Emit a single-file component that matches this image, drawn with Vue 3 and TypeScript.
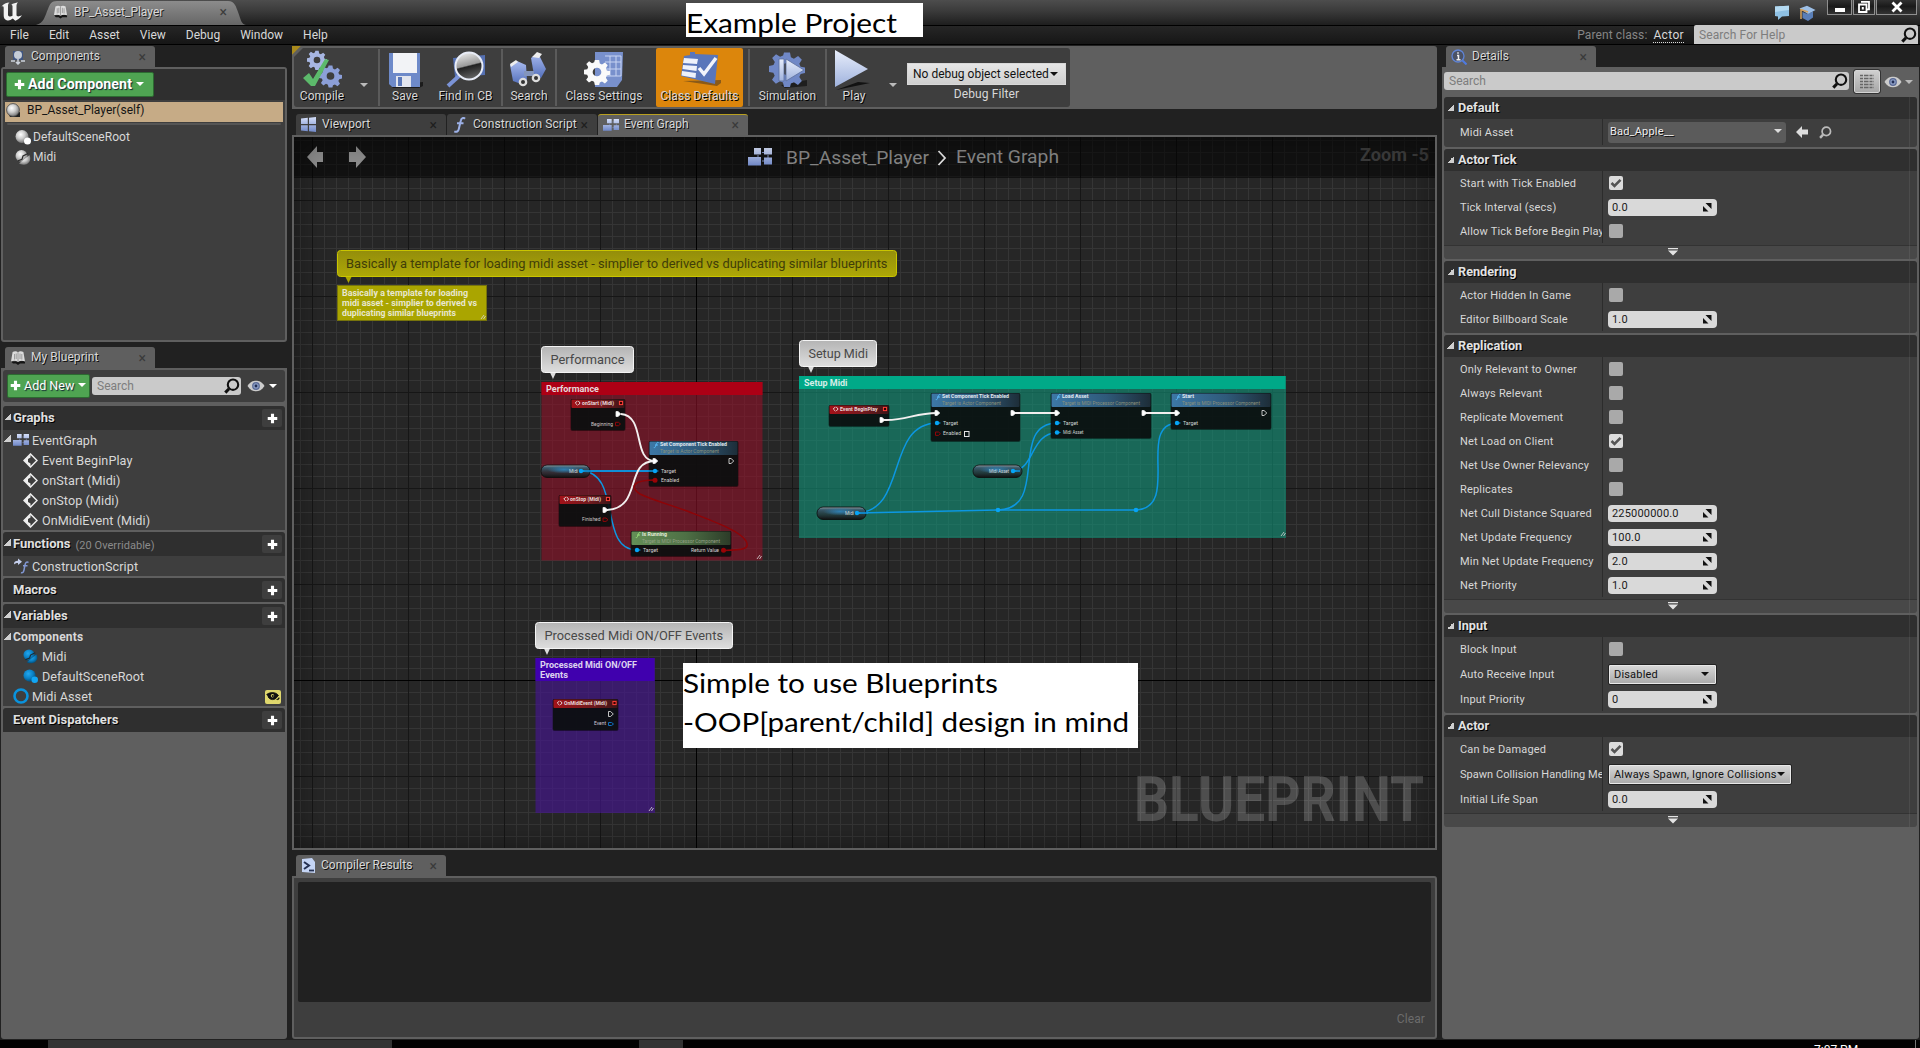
<script setup lang="ts">
interface Row { label: string; kind: 'check' | 'num' | 'drop' | 'asset'; value?: string; on?: boolean; wide?: boolean }
interface Section { title: string; rows: Row[]; more?: boolean }
interface Label { x: number; y: number; w: number; s: number; t: string; c: string; b?: boolean }
interface GraphNode { x: number; y: number; w: number; h: number; head: number; kind: 'event' | 'func' | 'pure' }

const menus = ['File', 'Edit', 'Asset', 'View', 'Debug', 'Window', 'Help']

const sections: Section[] = [
  { title: 'Default', rows: [{ label: 'Midi Asset', kind: 'asset', value: 'Bad_Apple__' }] },
  {
    title: 'Actor Tick', more: true, rows: [
      { label: 'Start with Tick Enabled', kind: 'check', on: true },
      { label: 'Tick Interval (secs)', kind: 'num', value: '0.0' },
      { label: 'Allow Tick Before Begin Play', kind: 'check' },
    ],
  },
  {
    title: 'Rendering', rows: [
      { label: 'Actor Hidden In Game', kind: 'check' },
      { label: 'Editor Billboard Scale', kind: 'num', value: '1.0' },
    ],
  },
  {
    title: 'Replication', more: true, rows: [
      { label: 'Only Relevant to Owner', kind: 'check' },
      { label: 'Always Relevant', kind: 'check' },
      { label: 'Replicate Movement', kind: 'check' },
      { label: 'Net Load on Client', kind: 'check', on: true },
      { label: 'Net Use Owner Relevancy', kind: 'check' },
      { label: 'Replicates', kind: 'check' },
      { label: 'Net Cull Distance Squared', kind: 'num', value: '225000000.0' },
      { label: 'Net Update Frequency', kind: 'num', value: '100.0' },
      { label: 'Min Net Update Frequency', kind: 'num', value: '2.0' },
      { label: 'Net Priority', kind: 'num', value: '1.0' },
    ],
  },
  {
    title: 'Input', rows: [
      { label: 'Block Input', kind: 'check' },
      { label: 'Auto Receive Input', kind: 'drop', value: 'Disabled' },
      { label: 'Input Priority', kind: 'num', value: '0' },
    ],
  },
  {
    title: 'Actor', more: true, rows: [
      { label: 'Can be Damaged', kind: 'check', on: true },
      { label: 'Spawn Collision Handling Method', kind: 'drop', value: 'Always Spawn, Ignore Collisions', wide: true },
      { label: 'Initial Life Span', kind: 'num', value: '0.0' },
    ],
  },
]

const events = ['Event BeginPlay', 'onStart (Midi)', 'onStop (Midi)', 'OnMidiEvent (Midi)']

const nodes: GraphNode[] = [
  { x: 571, y: 399, w: 54, h: 31, head: 9, kind: 'event' },
  { x: 649, y: 441, w: 89, h: 45, head: 14, kind: 'func' },
  { x: 559, y: 495, w: 52, h: 31, head: 9, kind: 'event' },
  { x: 631, y: 531, w: 100, h: 25, head: 14, kind: 'pure' },
  { x: 829, y: 405, w: 60, h: 21, head: 9, kind: 'event' },
  { x: 931, y: 393, w: 89, h: 48, head: 14, kind: 'func' },
  { x: 1051, y: 393, w: 100, h: 45, head: 14, kind: 'func' },
  { x: 1171, y: 393, w: 100, h: 36, head: 14, kind: 'func' },
  { x: 553, y: 699, w: 65, h: 31, head: 9, kind: 'event' },
]
const headFill = { event: 'url(#hEvent)', func: 'url(#hFunc)', pure: 'url(#hPure)' }

const pills = [{ x: 541, y: 465 }, { x: 973, y: 465 }, { x: 817, y: 507 }]

const execPins = [
  [618, 414, 1], [655, 461, 1], [731, 461, 0], [605, 510, 1], [882, 420, 1], [937, 413, 1], [1013, 413, 1],
  [1057, 413, 1], [1144, 413, 1], [1177, 413, 1], [1264, 413, 0], [610.5, 714, 0],
]
const bluePins = [[655, 471], [637, 550], [937, 423], [1057, 423], [1057, 432.5], [1177, 423], [581, 471], [1013, 471], [857, 513]]
const delegates = [[621, 403], [608, 499], [885, 409], [614.5, 703]]
const funcGlyphs = [[656, 445, '#5cc0ff'], [1178, 397, '#5cc0ff'], [1058, 397, '#5cc0ff'], [938, 397, '#5cc0ff'], [638, 535, '#9be07c']]
const eventGlyphs = [[577.5, 403], [566, 499], [835.5, 409], [559.5, 703]]

const bluWires = [
  'M581 471H655', 'M582 471C622 473 598 550 637 550',
  'M857 513C908 511 885 424 937 423', 'M857 513L998 510H1136',
  'M998 510C1050 509 1008 424 1057 423', 'M1013 471C1035 469 1030 434 1057 432.5',
  'M1136 510C1181 508 1136 425 1177 423',
]
const execWires = ['M621 414C646 416 632 461 655 461', 'M607 510C643 508 624 461 655 461', 'M884 420C905 421 915 413 937 413', 'M1013 413H1057', 'M1144 413H1177']

const bubbles = [
  { x: 541.5, y: 346.5, w: 92, tail: 553 },
  { x: 799.5, y: 340.5, w: 77, tail: 811 },
  { x: 535.5, y: 622.5, w: 197, tail: 547 },
]

const dim = '#484848'
const labels: Label[] = [
  { x: 550.5, y: 364, w: 74, s: 13.3, t: 'Performance', c: dim },
  { x: 808.5, y: 358, w: 59.5, s: 13.3, t: 'Setup Midi', c: dim },
  { x: 544.5, y: 640, w: 178.5, s: 13.3, t: 'Processed Midi ON/OFF Events', c: dim },
  { x: 346, y: 268, w: 541.5, s: 13.3, t: 'Basically a template for loading midi asset - simplier to derived vs duplicating similar blueprints', c: '#403d08' },
  { x: 342, y: 296, w: 126, s: 8.8, t: 'Basically a template for loading', c: '#e8e7cf', b: true },
  { x: 342, y: 306, w: 135, s: 8.8, t: 'midi asset - simplier to derived vs', c: '#e8e7cf', b: true },
  { x: 342, y: 316, w: 114, s: 8.8, t: 'duplicating similar blueprints', c: '#e8e7cf', b: true },
  { x: 546, y: 392, w: 53, s: 8.8, t: 'Performance', c: '#e6d8da', b: true },
  { x: 804, y: 386, w: 43.5, s: 8.8, t: 'Setup Midi', c: '#d5eee8', b: true },
  { x: 540, y: 668, w: 97, s: 8.8, t: 'Processed Midi ON/OFF', c: '#ddd3ee', b: true },
  { x: 540, y: 678, w: 28, s: 8.8, t: 'Events', c: '#ddd3ee', b: true },
  { x: 582, y: 404.8, w: 32, s: 5, t: 'onStart (Midi)', c: '#e8dada', b: true },
  { x: 591, y: 425.5, w: 22, s: 5, t: 'Beginning', c: '#cfc6c6' },
  { x: 660, y: 446.4, w: 67, s: 5, t: 'Set Component Tick Enabled', c: '#e0e8ee', b: true },
  { x: 660, y: 453, w: 59, s: 5, t: 'Target is Actor Component', c: '#8b927c' },
  { x: 661, y: 473, w: 15, s: 5, t: 'Target', c: '#d8d4d4' },
  { x: 661, y: 482, w: 18, s: 5, t: 'Enabled', c: '#d8d4d4' },
  { x: 569, y: 472.5, w: 9, s: 4.6, t: 'Midi', c: '#d8dade' },
  { x: 570, y: 500.7, w: 31, s: 5, t: 'onStop (Midi)', c: '#e8dada', b: true },
  { x: 582, y: 521, w: 18.5, s: 5, t: 'Finished', c: '#cfc6c6' },
  { x: 642, y: 536.3, w: 25, s: 5, t: 'Is Running', c: '#e2ecd8', b: true },
  { x: 642, y: 543, w: 78, s: 5, t: 'Target is MIDI Processor Component', c: '#93a085' },
  { x: 643, y: 552, w: 15, s: 5, t: 'Target', c: '#d8d4d4' },
  { x: 691, y: 552, w: 28, s: 5, t: 'Return Value', c: '#d8d4d4' },
  { x: 840, y: 410.7, w: 37.5, s: 5, t: 'Event BeginPlay', c: '#e8dada', b: true },
  { x: 942, y: 398.3, w: 67, s: 5, t: 'Set Component Tick Enabled', c: '#e0e8ee', b: true },
  { x: 942, y: 405, w: 59, s: 5, t: 'Target is Actor Component', c: '#8b927c' },
  { x: 943, y: 425, w: 15, s: 5, t: 'Target', c: '#d0d8d4' },
  { x: 943, y: 435.3, w: 18, s: 5, t: 'Enabled', c: '#d0d8d4' },
  { x: 1062, y: 398.3, w: 26.5, s: 5, t: 'Load Asset', c: '#e0e8ee', b: true },
  { x: 1062, y: 405, w: 78, s: 5, t: 'Target is MIDI Processor Component', c: '#8b927c' },
  { x: 1063, y: 425, w: 15, s: 5, t: 'Target', c: '#d0d8d4' },
  { x: 1063, y: 434.3, w: 20.5, s: 5, t: 'Midi Asset', c: '#d0d8d4' },
  { x: 1182, y: 398.3, w: 12, s: 5, t: 'Start', c: '#e0e8ee', b: true },
  { x: 1182, y: 405, w: 78, s: 5, t: 'Target is MIDI Processor Component', c: '#8b927c' },
  { x: 1183, y: 425, w: 15, s: 5, t: 'Target', c: '#d0d8d4' },
  { x: 989, y: 472.5, w: 20, s: 4.6, t: 'Midi Asset', c: '#d8dade' },
  { x: 845, y: 514.5, w: 9, s: 4.6, t: 'Midi', c: '#d8dade' },
  { x: 564, y: 704.7, w: 43, s: 5, t: 'OnMidiEvent (Midi)', c: '#e8dada', b: true },
  { x: 594, y: 725.3, w: 12, s: 5, t: 'Event', c: '#cfc6d6' },
]
</script>

<template>
  <div class="app">
    <svg class="defs" width="0" height="0">
      <defs>
        <linearGradient id="gBlue" x1="0" y1="0" x2="0" y2="1"><stop offset="0" stop-color="#d5dffa" /><stop offset="1" stop-color="#7088c8" /></linearGradient>
        <linearGradient id="gBlue2" x1="0" y1="0" x2="0" y2="1"><stop offset="0" stop-color="#a9bbf0" /><stop offset="1" stop-color="#5470bb" /></linearGradient>
        <linearGradient id="gPlay" x1="0" y1="0" x2="0" y2="1"><stop offset="0" stop-color="#e8eefb" /><stop offset="1" stop-color="#9fb2dd" /></linearGradient>
        <radialGradient id="gBall" cx=".4" cy=".35" r=".65"><stop offset="0" stop-color="#fff" /><stop offset=".5" stop-color="#ccc" /><stop offset="1" stop-color="#777" /></radialGradient>
        <radialGradient id="gBallB" cx=".4" cy=".35" r=".65"><stop offset="0" stop-color="#22a8f0" /><stop offset=".6" stop-color="#0a80c4" /><stop offset="1" stop-color="#04507c" /></radialGradient>
        <linearGradient id="gLens" x1="0" y1="0" x2=".25" y2="1"><stop offset="0" stop-color="#f6f6f6" /><stop offset=".55" stop-color="#9a9a9a" /><stop offset=".6" stop-color="#222" /><stop offset="1" stop-color="#5c5c5c" /></linearGradient>
      </defs>
      <symbol id="book" viewBox="0 0 16 16"><path d="M1 11.5L3 13.5H6L8 15L10 13.5H15V11" fill="#151515" /><path d="M2.6 2C4.5 1 6.500 1 8 2.200C9.500 1 11.500 1 13.400 2L15 11.500C12.500 10.500 10 10.600 8 12C6 10.600 3.500 10.500 1 11.500Z" fill="#dcdcdc" /><path d="M8 2.200V12M4.500 4V9.500M6.200 3.500V9M10 3.500V9M11.800 4V9.500" stroke="#8b8b8b" stroke-width=".8" /></symbol>
      <symbol id="gear" viewBox="0 0 24 24"><path fill-rule="evenodd" d="M10 1h4l.6 3.200 2 .9L19.400 3.300l2.500 2.500-1.700 2.700.9 2 3 .6v3.500l-3 .7-.9 2 1.700 2.700-2.600 2.600-2.700-1.800-2 .9L14 24h-4l-.7-3-2-.9L4.600 21.800 2 19.200l1.800-2.700-.9-2L0 14v-4l3-.6.9-2L2.100 4.700 4.700 2.100l2.700 1.800 2-.9zM12 8a4 4 0 1 0 0 8a4 4 0 1 0 0-8z" /></symbol>
      <symbol id="mag" viewBox="0 0 16 16"><circle cx="9" cy="6.700" r="5.200" fill="none" stroke="currentColor" stroke-width="2.100" /><path d="M5 10.700L1.300 14.600" stroke="currentColor" stroke-width="3" /></symbol>
      <symbol id="eye" viewBox="0 0 18 12"><path d="M.5 6C3 2 6 .8 9 .8S15 2 17.500 6C15 10 12 11.300 9 11.300S3 10 .5 6Z" fill="#ccc" /><circle cx="9" cy="6" r="3.900" fill="#5a6a96" /><circle cx="9" cy="6" r="2.700" fill="#8a9cc4" /><circle cx="9" cy="6" r="1.400" fill="#222e55" /></symbol>
      <symbol id="plus" viewBox="0 0 12 12"><path d="M4.300.8h3.400v3.500h3.500v3.400H7.700v3.500H4.300V7.700H.8V4.300h3.500z" fill="#fff" /></symbol>
      <symbol id="graph" viewBox="0 0 24 18"><path d="M14 4.500h4M14 13h4M10 7v4M20 7v4" stroke="#7b8bbd" stroke-width="1" /><path d="M6 0h7v6.500H6zM16 0h8v6.500h-8zM0 9h13v8.500H0zM16 9.500h8v7h-8z" fill="url(#gBlue)" /></symbol>
      <symbol id="tiles" viewBox="0 0 15 15"><path d="M0 1.500L6.800.8V7H0zM8 .7L15 0V7H8zM0 8.200h6.800v6L0 13.600zM8 8.200h7V15l-7-.7z" fill="url(#gBlue)" /></symbol>
      <symbol id="func" viewBox="0 0 12 16"><path d="M11.500 1.800C10 .2 7.800 1 7.200 4L5.300 12C4.800 14.500 3 15.400.8 14.300M3.500 6.200H10" fill="none" stroke="#9db1e8" stroke-width="2" /></symbol>
      <symbol id="evt" viewBox="0 0 15 15"><path d="M7.500 1L14 7.500L7.500 14L1 7.500Z" fill="none" stroke="#eee" stroke-width="1.500" /><path d="M1 7.500L7.500 1V4.600L5 6V9l2.500 1.400V14Z" fill="#eee" /></symbol>
      <symbol id="scene" viewBox="0 0 16 15"><circle cx="7" cy="6.500" r="6.500" fill="url(#gBall)" /><circle cx="12.500" cy="11" r="3.500" fill="#fff" /></symbol>
      <symbol id="comp" viewBox="0 0 16 15"><circle cx="6.500" cy="6" r="6" fill="url(#gBall)" /><path d="M4 13.500L14.500 5C16.500 9 14.500 14 10.500 14.500C7.500 15 5.500 14.500 4 13.500Z" fill="url(#gBall)" /><path d="M2.500 11L7 9.200L8 6L13 3.500" stroke="#2a2a2a" stroke-width="1.200" fill="none" /></symbol>
      <symbol id="sceneB" viewBox="0 0 16 15"><circle cx="7" cy="6.500" r="6.500" fill="url(#gBallB)" /><circle cx="12.500" cy="11" r="3.500" fill="#12a6f4" /></symbol>
      <symbol id="compB" viewBox="0 0 16 15"><circle cx="6.500" cy="6" r="6" fill="url(#gBallB)" /><path d="M4 13.500L14.500 5C16.500 9 14.500 14 10.500 14.500C7.500 15 5.500 14.500 4 13.500Z" fill="url(#gBallB)" /><path d="M2.500 11L7 9.200L8 6L13 3.500" stroke="#1c2a33" stroke-width="1.200" fill="none" /></symbol>
    </svg>

    <header class="title">
      <svg class="logo" width="24" height="22" viewBox="0 0 24 22"><path d="M1.500 6.500C3.500 3.800 6.500 2.600 9.500 2.500C8.300 3.600 8 4.500 8 6V15.200C8.700 16.600 10.500 17 12.500 15.800V6.300C12.500 5.300 12 4.800 11.300 4.700C13 3.500 15.800 3 18 2.300C17 3.500 16.500 4.500 16.500 5.800V15.600C17.300 16.700 18.500 16.700 22 15.300C19.500 18.600 17.500 20 15.300 20.800L12.800 18.600C10.300 20.500 8.500 20.900 6.600 20.200C4.600 19.500 3.600 17.700 3.700 15.500V8C3.700 6.300 3 6 1.500 6.500Z" fill="#f2f2f2" /></svg>
      <svg class="title-shape" width="210" height="24" viewBox="0 0 210 24"><defs><linearGradient id="tt" x1="0" y1="0" x2="0" y2="1"><stop offset="0" stop-color="#8c8c8c" /><stop offset="1" stop-color="#666" /></linearGradient></defs><path d="M0 24C8 22 9 15 12 8C14 3 15 0 21 0H192C199 0 200 6 202 11C205 19 205 23 210 24Z" fill="url(#tt)" /></svg>
      <div class="title-tab"><svg width="15" height="16"><use href="#book" /></svg><span>BP_Asset_Player</span><i class="x">×</i></div>
      <div class="win">
        <svg width="16" height="16" viewBox="0 0 16 16"><path d="M1 1.500L15 .8V11L8 11.500L4 15V11.500L1 11Z" fill="#8fc1e4" /><path d="M1 1.500L15 .8V5L1 7Z" fill="#b3d9f1" /></svg>
        <svg class="cap" width="17" height="17" viewBox="0 0 17 17"><path d="M3.500 7V13L9 16L14 12.500V6.500L8.500 9Z" fill="#5a7fb8" /><path d="M.5 3.500L8 .8L16.500 5L9 9Z" fill="#9dbfe6" /><path d="M9 7L2 4.500V14" fill="none" stroke="#d3a25e" stroke-width="1.500" /></svg>
        <b class="wb w1"><svg width="12" height="12"><rect x="1" y="7" width="10" height="4" fill="#fff" /></svg></b>
        <b class="wb w2"><svg width="12" height="12" viewBox="0 0 12 12"><path d="M3 .800h8v7.500h-2M1 3.500h7.500v7.500H1z" fill="none" stroke="#fff" stroke-width="1.800" /><rect x="3.800" y="6" width="2" height="2.500" fill="#fff" /></svg></b>
        <b class="wb w3"><svg width="12" height="12" viewBox="0 0 12 12"><path d="M1.500 1.500L10.500 10.500M10.500 1.500L1.500 10.500" stroke="#fff" stroke-width="2.800" /></svg></b>
      </div>
    </header>

    <nav class="menu">
      <span v-for="m in menus" :key="m">{{ m }}</span>
      <div class="menu-right"><em>Parent class:</em><u>Actor</u><div class="field help"><span>Search For Help</span><svg width="16" height="16"><use href="#mag" /></svg></div></div>
    </nav>

    <main class="cols">
      <aside class="left">
        <div class="tabs"><div class="tab on"><svg width="16" height="16" viewBox="0 0 16 16"><path d="M3 2h10v9H3z" fill="#40557f" /><circle cx="8" cy="6" r="4" fill="#c4ccd8" /><path d="M1 12H5M11 12H15M8 10V14M6 13L8 15L10 13" stroke="#cdd3dc" stroke-width="1.500" fill="none" /></svg><span>Components</span><i class="x">×</i></div></div>
        <section class="comp-panel">
          <div class="comp-top"><button class="green big"><svg width="11" height="11"><use href="#plus" /></svg><b>Add Component</b><i class="car w" /></button></div>
          <div class="self"><svg width="15" height="15" viewBox="0 0 15 15"><path d="M3 12L14 9V14H4Z" fill="#222" /><circle cx="7" cy="7" r="6.400" fill="url(#gBall)" stroke="#444" stroke-width=".8" /></svg>BP_Asset_Player(self)</div>
          <div class="rule" />
          <div class="crow"><svg width="16" height="15"><use href="#scene" /></svg>DefaultSceneRoot</div>
          <div class="crow"><svg width="16" height="15"><use href="#comp" /></svg>Midi</div>
        </section>
        <div class="tabs second"><div class="tab on"><svg width="16" height="16"><use href="#book" /></svg><span>My Blueprint</span><i class="x">×</i></div></div>
        <section class="bp-panel">
          <div class="bp-bar">
            <button class="green"><svg width="11" height="11"><use href="#plus" /></svg><span>Add New</span><i class="car w" /></button>
            <div class="field s1"><span>Search</span><svg width="16" height="16"><use href="#mag" /></svg></div>
            <svg class="eye" width="18" height="12"><use href="#eye" /></svg><i class="car w" />
          </div>
          <div class="bh first"><i class="tri" /><b>Graphs</b><i class="add"><svg width="11" height="11"><use href="#plus" /></svg></i></div>
          <div class="bbody">
            <div class="r0"><i class="tri" /><svg width="16" height="12"><use href="#graph" /></svg>EventGraph</div>
            <div v-for="e in events" :key="e" class="r1"><svg width="15" height="15"><use href="#evt" /></svg>{{ e }}</div>
          </div>
          <div class="bh"><i class="tri" /><b>Functions</b><small>(20 Overridable)</small><i class="add"><svg width="11" height="11"><use href="#plus" /></svg></i></div>
          <div class="bbody"><div class="r0 fn"><svg width="16" height="16" viewBox="0 0 16 16"><path d="M1 6.500C1 3.500 2.500 2.800 5 2.800V.5L9 3.800L5 7V5C3 5 2 5.500 1 6.500Z" fill="#c5cfec" /><path d="M15.500 4.500C13.500 3.500 12.500 4.500 12 7L11 12C10.500 14.500 9.500 15.300 8 14.500M10 7.700H14.500" fill="none" stroke="#8298d4" stroke-width="1.500" /></svg>ConstructionScript</div></div>
          <div class="bh"><b>Macros</b><i class="add"><svg width="11" height="11"><use href="#plus" /></svg></i></div>
          <div class="bh"><i class="tri" /><b>Variables</b><i class="add"><svg width="11" height="11"><use href="#plus" /></svg></i></div>
          <div class="bbody">
            <div class="r0 grp"><i class="tri" /><b>Components</b></div>
            <div class="r1"><svg width="15" height="15"><use href="#compB" /></svg>Midi</div>
            <div class="r1"><svg width="15" height="15"><use href="#sceneB" /></svg>DefaultSceneRoot</div>
            <div class="r0 var"><svg width="16" height="16" viewBox="0 0 16 16"><circle cx="8" cy="8" r="6.500" fill="none" stroke="#0a93dd" stroke-width="2.600" /></svg>Midi Asset<span class="pub"><svg width="14" height="9" viewBox="0 0 14 9"><path d="M.5 2.500C4 0 9.500 -.5 12.500 3.500L11 5C9 8.500 4 8.500 2 4.800M10.500 7.500C12.500 8 13.500 7 13 5.500" fill="#111" stroke="#111" stroke-width=".8" /><circle cx="6.500" cy="3.800" r="1.700" fill="#dbd26a" /><circle cx="6.800" cy="4" r="1.100" fill="#111" /></svg></span></div>
          </div>
          <div class="bh"><b>Event Dispatchers</b><i class="add"><svg width="11" height="11"><use href="#plus" /></svg></i></div>
        </section>
      </aside>

      <div class="mid">
        <div class="tb-wrap">
          <div class="tb">
            <div class="ti" style="width: 56px"><svg width="42" height="40" viewBox="0 0 42 40"><use href="#gear" x="6" y="0" width="20" height="20" fill="#a7b6e2" /><use href="#gear" x="18" y="14" width="23" height="24" fill="#8c9fd8" /><path d="M2 28L8 23L12 29L24 9L28 10L14 36H10Z" fill="#5cb96b" /></svg><span>Compile</span></div>
            <div class="tc" style="width: 28px"><i class="car g" /></div><i class="sep" />
            <div class="ti" style="width: 50px"><svg width="36" height="40" viewBox="0 0 36 40"><path d="M3 35L36 32V36L32 38H6Z" fill="#1b1b1b" /><path d="M2 3H33V37H5L2 34Z" fill="#6e8ac9" /><path d="M6 3H30V23H6Z" fill="#f2f3f6" /><path d="M9 26H24V37H9Z" fill="#e2e5ee" /><path d="M11 27H15V36H11Z" fill="#5a77b8" /></svg><span>Save</span></div>
            <div class="ti" style="width: 71px"><svg width="42" height="40" viewBox="0 0 42 40"><path d="M8 8L40 5V25L10 27Z" fill="#5570b2" /><path d="M14 26L3 36" stroke="#7b93d6" stroke-width="4" /><circle cx="24" cy="16" r="13.500" fill="url(#gLens)" stroke="#e8ecf6" stroke-width="2" /></svg><span>Find in CB</span></div><i class="sep" />
            <div class="ti" style="width: 52px"><svg width="40" height="40" viewBox="0 0 40 40"><path d="M1 15L8 11L17 15L18 30L12 34L4 31Z" fill="url(#gBlue2)" /><path d="M22 8L29 3L37 19L32 28L25 25Z" fill="url(#gBlue2)" /><path d="M15 21H25V26H15Z" fill="#8395bd" /><circle cx="14" cy="32" r="4.300" fill="#ddd" /><circle cx="14" cy="32" r="2" fill="#333" /><circle cx="27" cy="28" r="4.300" fill="#ddd" /><circle cx="27" cy="28" r="2" fill="#333" /><path d="M1 14L7 10L9 12L2 17ZM23 7L28 2L33 4L30 8Z" fill="#eee" /></svg><span>Search</span></div><i class="sep" />
            <div class="ti" style="width: 94px"><svg width="42" height="40" viewBox="0 0 42 40"><path d="M12 2H40L39 30L34 37H12Z" fill="#7890cc" /><path d="M22 6H38V26H20M22 12H38M22 19H38M27 6V26M33 6V26" fill="none" stroke="#c8d4f2" stroke-width="1" /><use href="#gear" x="1" y="9" width="26" height="26" fill="#fafafa" /></svg><span>Class Settings</span></div>
            <div class="ti orange" style="width: 87px"><svg width="42" height="40" viewBox="0 0 42 40"><path d="M4 31L38 36L42 33V30" fill="#8a5a18" /><path d="M5 6L11 5V2H16V4L39 5L36 34L2 26Z" fill="#5a76ba" /><path d="M5 8L19 9L18 14L4 13ZM4 15L18 16L17.500 21L3.500 19ZM3 21L17 23L16.500 28L2.500 25.500Z" fill="#eef1fa" /><path d="M20 18L25 24L37 8" fill="none" stroke="#f2f4fb" stroke-width="3.500" /></svg><span>Class Defaults</span></div><i class="sep gap" />
            <div class="ti" style="width: 75px"><svg width="42" height="40" viewBox="0 0 42 40"><path d="M14 35L40 30V36L18 38Z" fill="#1e1e1e" /><use href="#gear" x="2" y="1" width="36" height="36" fill="#7088c6" /><path d="M12 9H17V31H12ZM19 9L37 20L19 31Z" fill="url(#gPlay)" stroke="#5c6f9c" stroke-width=".8" /></svg><span>Simulation</span></div><i class="sep" />
            <div class="ti" style="width: 54px"><svg width="40" height="40" viewBox="0 0 40 40"><path d="M2 40L36 33L24 32Z" fill="#121212" /><path d="M1 0L34 19L1 37Z" fill="url(#gPlay)" /></svg><span>Play</span></div>
            <div class="tc last"><i class="car g" /></div>
            <div class="dbg"><div class="combo">No debug object selected<i class="car k" /></div><span>Debug Filter</span></div>
          </div>
        </div>
        <div class="tabs gt">
          <div class="tab"><svg width="15" height="15"><use href="#tiles" /></svg><span>Viewport</span><i class="x">×</i></div>
          <div class="tab"><svg width="15" height="16"><use href="#func" /></svg><span>Construction Script</span><i class="x">×</i></div>
          <div class="tab on act"><svg width="16" height="12"><use href="#graph" /></svg><span>Event Graph</span><i class="x">×</i></div>
        </div>
        <div class="canvas">
          <svg width="1141" height="711" viewBox="294 137 1141 711">
            <defs>
              <pattern id="minor" width="12" height="12" patternUnits="userSpaceOnUse"><path d="M0 .5H12" transform="translate(0 8)" stroke="#353535" stroke-width="1" /><path d="M.5 0V12" stroke="#353535" /></pattern>
              <pattern id="major" x="24" y="8" width="96" height="96" patternUnits="userSpaceOnUse"><path d="M0 .5H96M.5 0V96" stroke="#161616" /></pattern>
              <linearGradient id="hEvent"><stop offset="0" stop-color="#a31219" /><stop offset=".6" stop-color="#721a1e" /><stop offset="1" stop-color="#3a1517" /></linearGradient>
              <linearGradient id="hFunc"><stop offset="0" stop-color="#3d78a6" /><stop offset=".55" stop-color="#2f5a7a" /><stop offset="1" stop-color="#1d2d38" /></linearGradient>
              <linearGradient id="hPure"><stop offset="0" stop-color="#648f57" /><stop offset=".55" stop-color="#4e7045" /><stop offset="1" stop-color="#2c3b28" /></linearGradient>
              <linearGradient id="bub" x1="0" y1="0" x2="0" y2="1"><stop offset="0" stop-color="#b4b4b4" /><stop offset="1" stop-color="#dedede" /></linearGradient>
              <linearGradient id="yel" x1="0" y1="0" x2="0" y2="1"><stop offset="0" stop-color="#938d0b" /><stop offset="1" stop-color="#aea806" /></linearGradient>
              <linearGradient id="pill" x1="0" y1="0" x2="0" y2="1"><stop offset="0" stop-color="#8f9ba0" /><stop offset=".22" stop-color="#39596a" /><stop offset=".6" stop-color="#263238" stop-opacity=".8" /><stop offset="1" stop-color="#111" /></linearGradient>
              <radialGradient id="pillB"><stop offset="0" stop-color="#2f7fb0" /><stop offset="1" stop-color="#2f7fb0" stop-opacity="0" /></radialGradient>
            </defs>
            <rect x="294" y="137" width="1141" height="711" fill="#262626" />
            <rect x="294" y="137" width="1141" height="711" fill="url(#minor)" />
            <rect x="294" y="137" width="1141" height="711" fill="url(#major)" />
            <path d="M696.500 137V848M294 680.500H1435" stroke="#000" />

            <rect x="294" y="137" width="1141" height="41" fill="#000" fill-opacity=".55" />

            <text x="1134" y="821" textLength="290" lengthAdjust="spacingAndGlyphs" font-size="63" font-weight="700" fill="#fff" fill-opacity=".19">BLUEPRINT</text>

            <g>
              <rect x="541.500" y="382" width="221" height="178.500" fill="#8c1228" fill-opacity=".64" /><rect x="541.500" y="382" width="221" height="13" fill="#ad0015" />
              <rect x="799" y="376" width="487" height="162" fill="#128f76" fill-opacity=".64" /><rect x="799" y="376" width="486.500" height="13" fill="#00a988" />
              <rect x="535.500" y="658" width="119.500" height="155" fill="#45168e" fill-opacity=".66" /><rect x="535.500" y="658" width="119" height="23" fill="#4000ae" />
              <rect x="337.500" y="285.500" width="149" height="35" fill="#aaa500" stroke="#77740c" />
              <path d="M757 559l3-4M759.500 559l2-3M1281 536l3-4M1283.500 536l2-3M649 811l3-4M651.500 811l2-3M481 319l3-4M483.500 319l2-3" stroke="#d8d8d8" stroke-width=".8" />
            </g>

            <g v-for="b in bubbles" :key="b.x">
              <path :d="`M${b.tail - 3} ${b.y + 26}h6l-3 6.500z`" fill="#ddd" />
              <rect :x="b.x" :y="b.y" :width="b.w" height="26" rx="3" fill="url(#bub)" stroke="#f4f4f4" />
            </g>
            <path d="M345 276h7l-3.500 7z" fill="#aca600" /><rect x="337.500" y="250.500" width="559" height="26" rx="3" fill="url(#yel)" stroke="#c9c500" />

            <g fill="none" stroke="#0c97e2" stroke-width="1.500"><path v-for="d in bluWires" :key="d" :d="d" /></g>

            <g v-for="n in nodes" :key="n.x + n.y * 2000">
              <rect :x="n.x - .500" :y="n.y" :width="n.w + 1" :height="n.h + 1" rx="2" fill="#000" fill-opacity=".5" />
              <rect :x="n.x" :y="n.y" :width="n.w" :height="n.h" rx="1.500" fill="#0c1010" fill-opacity=".85" />
              <rect :x="n.x + .500" :y="n.y + .500" :width="n.w - 1" :height="n.head - .500" rx="1" :fill="headFill[n.kind]" />
            </g>
            <g v-for="p in pills" :key="p.x">
              <rect :x="p.x" :y="p.y" width="49" height="12.500" rx="6" fill="url(#pill)" stroke="#0b0b0b" stroke-width=".8" />
              <ellipse :cx="p.x + 23" :cy="p.y + 4.500" rx="17" ry="4" fill="url(#pillB)" />
            </g>
            <g fill="none" stroke="#0c97e2" stroke-width="1.400"><path d="M581 471H655M857 513H868M1013 471H1020" /></g>
            <g fill="none" stroke="#f2efef" stroke-width="1.900"><path v-for="d in execWires" :key="d" :d="d" /></g>
            <path d="M655 480C633 480 629 487 640 494C655 501 668 504 687 511C715 522 740 531 746 541C750 549 744 550 724 550.500" fill="none" stroke="#8e0407" stroke-width="1.500" />

            <path v-for="(p, i) in execPins" :key="'e' + i" :d="`M${p[0] - 2} ${p[1] - 2.500}h2l2.800 2.500l-2.800 2.500h-2z`" :fill="p[2] ? '#fff' : 'none'" stroke="#eee" stroke-width=".8" />
            <g v-for="(p, i) in bluePins" :key="'b' + i" fill="#06a4f6"><circle :cx="p[0]" :cy="p[1]" r="2.200" /><path :d="`M${p[0] + 2.300} ${p[1] - 1}l1.500 1l-1.500 1z`" /></g>
            <g fill="#9a0306"><circle cx="655" cy="480.300" r="2.500" /><circle cx="723.500" cy="550.300" r="2.500" /></g>
            <g fill="none" stroke-width="1"><path d="M615.500 422.300h3l2 1.700l-2 1.700h-3zM603 518h3l2 1.700l-2 1.700h-3zM935.500 432h3l2 1.700l-2 1.700h-3z" stroke="#8f0508" /><path d="M608.500 722.500h3l2 1.500l-2 1.500h-3z" stroke="#0f6fc0" /><rect x="964.500" y="431.500" width="4.500" height="5" stroke="#e5e5e5" /></g>
            <rect v-for="(p, i) in delegates" :key="'d' + i" :x="p[0] - 1.600" :y="p[1] - 1.600" width="3.200" height="3.200" fill="#300" stroke="#ff4038" stroke-width="1" />
            <path v-for="(p, i) in eventGlyphs" :key="'g' + i" :d="`M${p[0]} ${p[1] - 2.200}l-2.200 2.200l2.200 2.200M${p[0] + .800} ${p[1] - 2}l1.800 2l-1.800 2`" fill="none" stroke="#eee" stroke-width=".9" />
            <path v-for="(p, i) in funcGlyphs" :key="'f' + i" :d="`M${Number(p[0]) + 2.500} ${Number(p[1]) - 2.500}c-1.500 -.5 -1.800 .5 -2.200 2l-.8 2c-.3 1 -.8 1.300 -1.700 1M${Number(p[0]) - 1} ${p[1]}h3`" fill="none" :stroke="String(p[2])" stroke-width=".9" />
            <circle cx="998" cy="510" r="2.300" fill="#06a4f6" /><circle cx="1136" cy="510" r="2.300" fill="#06a4f6" />

            <text v-for="(l, i) in labels" :key="i" :x="l.x" :y="l.y" :font-size="l.s" :textLength="l.w" lengthAdjust="spacingAndGlyphs" :fill="l.c" :font-weight="l.b ? 700 : 400">{{ l.t }}</text>

            <g fill="#8c8c8c"><path d="M307 157L317 146V152H323V162H317V168ZM366 157L356 146V152H349V162H356V168Z" /></g>
            <svg x="748" y="148" width="24" height="18"><use href="#graph" /></svg>
            <g font-size="19" fill="#868686"><text x="786" y="163.500" textLength="143" lengthAdjust="spacingAndGlyphs">BP_Asset_Player</text><text x="956" y="163" textLength="103" lengthAdjust="spacingAndGlyphs">Event Graph</text></g>
            <path d="M938.500 151L945 158L938.500 165" fill="none" stroke="#e2e2e2" stroke-width="1.800" />
            <text x="1360" y="161" font-size="18" font-weight="700" fill="#3b3b3b" textLength="69" lengthAdjust="spacingAndGlyphs">Zoom -5</text>
          </svg>
          <div class="note n2"><svg width="455" height="85"><text x="0" y="29.500" textLength="315" lengthAdjust="spacingAndGlyphs">Simple to use Blueprints</text><text x="0" y="69" textLength="446" lengthAdjust="spacingAndGlyphs">-OOP[parent/child] design in mind</text></svg></div>
        </div>
        <div class="tabs ct"><div class="tab on"><svg width="15" height="16" viewBox="0 0 15 16"><path d="M1 1L11 0L14 4V15L1 14Z" fill="#c4d4f4" /><path d="M3 4L8 7.500L3 11" fill="none" stroke="#243052" stroke-width="2" /><path d="M8 12.500H13" stroke="#243052" stroke-width="1.800" /></svg><span>Compiler Results</span><i class="x">×</i></div></div>
        <div class="compiler"><div class="log" /><span>Clear</span></div>
      </div>

      <aside class="right">
        <div class="tabs"><div class="tab on"><svg width="16" height="16" viewBox="0 0 16 16"><circle cx="7" cy="7" r="6" fill="#4a5266" stroke="#5f84d6" stroke-width="1.300" /><path d="M11.500 11.500L15.500 15.500" stroke="#4f7ae0" stroke-width="2" /><path d="M6 6.500H7.500V10.500M5.500 10.800H9.500M7 3.200V4.800" stroke="#eee" stroke-width="1.500" fill="none" /></svg><span>Details</span><i class="x">×</i></div></div>
        <section class="dp">
          <div class="dbar"><div class="field s2"><span>Search</span><svg width="16" height="16"><use href="#mag" /></svg></div><div class="gridbtn"><svg width="14" height="15"><path d="M0 1.500H14M0 4.500H14M0 7.500H14M0 10.500H14M0 13.500H14" stroke="#666" stroke-width="1.600" stroke-dasharray="3 1 4.500 1" /></svg></div><svg class="eye" width="18" height="12"><use href="#eye" /></svg><i class="car g" /></div>
          <div v-for="s in sections" :key="s.title" class="sec">
            <div class="sh"><i class="tri" /><b>{{ s.title }}</b></div>
            <div class="sb">
              <div v-for="r in s.rows" :key="r.label" class="dr" :class="{ tall: r.kind === 'drop' || r.kind === 'asset' }">
                <label :class="{ tight: r.wide }">{{ r.label }}</label>
                <div class="dv">
                  <i v-if="r.kind === 'check'" class="ck" :class="{ on: r.on }"><svg v-if="r.on" width="14" height="14" viewBox="0 0 14 14"><path d="M2.500 7L5.500 10L11.500 3.800" fill="none" stroke="#555" stroke-width="2.600" /></svg></i>
                  <div v-else-if="r.kind === 'num'" class="num">{{ r.value }}<svg width="9" height="9" viewBox="0 0 9 9"><path d="M2.500 0H8.500V6ZM0 3L5.500 8.500H0Z" fill="#111" /></svg></div>
                  <div v-else-if="r.kind === 'drop'" class="drop" :class="{ wide: r.wide }">{{ r.value }}<i class="car k" /></div>
                  <template v-else><div class="asset">{{ r.value }}<i class="car l" /></div><svg class="al" width="12" height="12" viewBox="0 0 12 12"><path d="M0 6L6 0V3.500H12V8.500H6V12Z" fill="#ddd" /></svg><svg class="am" width="13" height="13" viewBox="0 0 16 16"><use href="#mag" /></svg></template>
                </div>
              </div>
            </div>
            <div v-if="s.more" class="more"><svg width="10" height="8"><path d="M0 0H10V1.300H0ZM0 2.500H10L5 7.500Z" fill="#e3e3e3" /></svg></div>
          </div>
        </section>
      </aside>
    </main>

    <footer class="task"><i class="a" /><i class="b" /><span>7:07 PM</span><i class="c" /></footer>
    <div class="note n1"><svg width="237" height="34"><text x="0" y="29.500" textLength="211" lengthAdjust="spacingAndGlyphs">Example Project</text></svg></div>
  </div>
</template>

<style>
body { margin: 0; background: #212121; overflow: hidden; }
</style>

<style scoped>
.app { position: relative; width: 1920px; height: 1048px; display: flex; flex-direction: column; overflow: hidden; background: #212121; font-family: Roboto, "Liberation Sans", sans-serif; font-size: 12px; color: #d8d8d8; }
.app * { box-sizing: border-box; }
svg { display: block; flex: none; }
.defs { position: absolute; }
svg text { font-family: Roboto, sans-serif; }
i, em { font-style: normal; }
.title { position: relative; height: 25px; display: flex; background: linear-gradient(#4d4d4d, #3a3a3a 45%, #1e1e1e); }
.title-shape { position: absolute; left: 36px; top: 1px; }
.title-tab { position: relative; margin-left: 29px; width: 180px; display: flex; align-items: center; gap: 6px; height: 24px; text-shadow: 1px 1px 0 #222; }
.x { margin-left: auto; color: #3c3c3c; font-size: 14px; text-shadow: none; }
.title-tab .x { margin-right: 6px; }
.win { margin-left: auto; display: flex; padding-right: 3px; }
.win > svg { margin-top: 5px; }
.win > .cap { margin: 5px 10px 0 9px; }
.wb { height: 15px; border: 1px solid #8f8f8f; border-top: 0; display: flex; align-items: center; justify-content: center; background: linear-gradient(#303030, #1a1a1a 45%, #333); margin-left: 1px; }
.w1 { width: 25px; } .w2 { width: 22px; } .w3 { width: 41px; }
.menu { height: 20px; border-top: 1px solid #000; border-bottom: 1px solid #000; background: linear-gradient(#262626, #161616); display: flex; gap: 20px; padding-left: 10px; line-height: 18px; letter-spacing: .01px; }
.menu-right { margin-left: auto; display: flex; margin-right: 2px; color: #858585; letter-spacing: .1px; }
.menu-right u { color: #d8d8d8; text-decoration: none; border-bottom: 1px dotted #ddd; height: 17px; margin: 0 10px 0 6px; letter-spacing: .35px; }
.field { background: #cacaca; border-radius: 3px; display: flex; align-items: center; justify-content: space-between; color: #7d7d7d; padding: 0 1px 0 5px; height: 18px; }
.field svg { color: #101010; }
.help { width: 224px; height: 19px; margin-top: -1px; border-radius: 2px 2px 0 0; letter-spacing: .1px; }
.cols { display: flex; height: 995px; padding-top: 1px; }
.tabs { height: 21px; display: flex; padding-left: 4px; }
.tab { width: 150px; height: 21px; background: #3e3e3e; border-radius: 3px 3px 0 0; display: flex; align-items: center; padding: 0 9px 0 5px; text-shadow: 1px 1px 0 #0c0c0c; }
.tab.on { background: #5f5f5f; }
.tab .x { color: #1f1f1f; }
.tab.on .x { color: #3a3a3a; }
.tab span { margin-left: 5px; margin-top: -2px; white-space: nowrap; letter-spacing: .05px; }
.gt .tab:not(.on) span { margin-left: 6px; }
.left { width: 286px; margin-left: 1px; display: flex; flex-direction: column; }
.comp-panel { height: 275px; border: 2px solid #5f5f5f; border-radius: 3px; background: #3e3e3e; }
.comp-top { height: 31px; background: #2f2f2f; padding: 3px; }
.green { display: flex; align-items: center; border: 1px solid #2c6a31; background: #4fa452; color: #fff; font: 12.5px Roboto, sans-serif; padding: 0 0 2px 2px; height: 24px; width: 83px; border-radius: 2px; text-shadow: 1px 1px 1px #123; gap: 3px; white-space: nowrap; letter-spacing: 0; }
.green.big { height: 25px; width: 148px; font-size: 14.2px; padding: 0 0 1px 7px; letter-spacing: .08px; }
.car { display: inline-block; border: 4px solid transparent; border-bottom: 0; border-top: 4px solid #fff; flex: none; }
.car.g { border-top-color: #bbb; } .car.k { border-top-color: #111; } .car.l { border-top-color: #ddd; }
.green .car { margin-left: 1px; }
.self { height: 20px; margin: 2px 0 0 2px; width: 278px; background: #c6ab86; color: #151515; display: flex; align-items: center; gap: 6px; padding-left: 1px; padding-bottom: 5px; }
.self svg { margin-top: 2px; }
.rule { height: 2px; margin: 1px 4px 2px; background: #555; border-radius: 1px; }
.crow { height: 20px; display: flex; align-items: center; padding-left: 12px; gap: 2px; letter-spacing: .05px; }
.second { margin-top: 5px; }
.bp-panel { height: 671px; background: #5f5f5f; border-radius: 0 0 3px 3px; padding: 2px 2px 0; }
.bp-bar { height: 32px; background: #3e3e3e; border-radius: 3px; display: flex; align-items: center; padding-left: 4px; }
.s1 { width: 149px; margin-left: 2px; }
.eye { margin: 0 4px 0 6px; }
.bh { height: 24px; margin-top: 2px; background: #2f2f2f; border-radius: 3px 3px 0 0; display: flex; align-items: center; padding: 0 3px 0 10px; position: relative; text-shadow: 1px 1px 0 #000; color: #e0e0e0; font-size: 13px; }
.bh b { margin-top: -1px; }
.bh.first { margin-top: 4px; }
.bh small { font-size: 11px; color: #8b8b8b; margin-left: 5px; letter-spacing: .05px; text-shadow: none; padding-top: 2px; }
.bh .tri, .r0 .tri { position: absolute; left: 1px; top: 7px; }
.tri { width: 7px; height: 7px; background: linear-gradient(135deg, transparent 50%, #cfcfcf 50%); flex: none; }
.add { margin-left: auto; width: 20px; height: 18px; background: #3e3e3e; border-radius: 2px; display: flex; align-items: center; justify-content: center; }
.bbody { background: #3e3e3e; font-size: 12.6px; letter-spacing: .08px; }
.r0, .r1 { height: 20px; display: flex; align-items: center; position: relative; padding-left: 10px; padding-top: 1px; gap: 3px; }
.r0 .tri { top: 5px; }
.r0 svg { margin-bottom: 2px; }
.r1 { padding-left: 20px; gap: 4px; }
.grp { height: 18px; padding-top: 0; font-size: 12px; }
.grp b { letter-spacing: .15px; }
.pub { margin-left: auto; margin-right: 4px; width: 16px; height: 14px; background: #dfd76d; border-radius: 2px; display: flex; align-items: center; justify-content: center; }
.r0 .pub svg { margin: 0; }
.mid { width: 1145px; margin-left: 5px; display: flex; flex-direction: column; }
.tb-wrap { height: 63px; padding: 2px; border-radius: 0 3px 3px 0; background: linear-gradient(135deg, #a98a1c 6px, #5f5f5f 6.5px); }
.tb { width: 776px; height: 59px; background: #3e3e3e; border-radius: 3px; display: flex; clip-path: polygon(9px 0, 100% 0, 100% 100%, 0 100%, 0 9px); }
.ti { display: flex; flex-direction: column; align-items: center; height: 59px; padding-top: 2px; text-shadow: 1px 1px 0 #000; white-space: nowrap; flex: none; letter-spacing: .05px; }
.ti span { margin-top: -1px; line-height: 15px; }
.orange { background: #dc860c; margin-left: 5px; border-radius: 2px; }
.sep { width: 2px; height: 57px; margin-top: 1px; background: #5b5b5b; flex: none; }
.sep.gap { margin-left: 5px; }
.tc { padding: 28px 0 0 10px; }
.tc.last { width: 23px; padding-left: 8px; }
.dbg { margin: 15px 0 0 3px; display: flex; flex-direction: column; align-items: center; width: 159px; }
.combo { width: 159px; height: 22px; background: linear-gradient(#e6e6e6, #cfcfcf); border: 1px solid #d8d8d8; color: #121212; display: flex; align-items: center; justify-content: space-between; padding: 0 7px 0 5px; white-space: nowrap; letter-spacing: 0; }
.dbg span { line-height: 16px; margin-top: 1px; letter-spacing: .1px; }
.gt { margin-top: 5px; gap: 1px; }
.gt .act { border-top: 1px solid #b9a020; }
.canvas { position: relative; height: 715px; border: 2px solid #5f5f5f; }
.canvas::after { content: ""; position: absolute; inset: 0; box-shadow: inset 0 0 30px rgba(0, 0, 0, .45); pointer-events: none; }
.note { position: absolute; background: #fff; z-index: 2; overflow: hidden; }
.note text { font-family: Lato, sans-serif; font-size: 27.5px; fill: #000; }
.n1 { left: 686px; top: 3px; } .n2 { left: 389px; top: 526px; }
.ct { margin-top: 5px; }
.compiler { height: 163px; border: 2px solid #5f5f5f; background: #3e3e3e; border-radius: 0 3px 3px 3px; padding: 4px; display: flex; flex-direction: column; }
.log { height: 120px; background: #212121; border-radius: 2px; }
.compiler span { margin: 10px 6px 0 auto; color: #6c6c6c; letter-spacing: .1px; }
.right { width: 477px; margin-left: 5px; display: flex; flex-direction: column; }
.dp { height: 972px; background: #5f5f5f; border-radius: 0 0 3px 3px; padding: 3px 2px 0; }
.dbar { display: flex; align-items: center; height: 23px; margin-bottom: 4px; }
.s2 { width: 405px; margin-bottom: 1px; }
.gridbtn { width: 26px; height: 23px; margin-left: 5px; border: 1px solid #d5d5d5; outline: 1px solid #333; background: linear-gradient(#cfcfcf, #a8a8a8); display: flex; align-items: center; justify-content: center; border-radius: 2px; }
.dbar .eye { margin: 0 3px 0 4px; }
.sec { position: relative; width: 473px; margin-bottom: 2px; border-radius: 3px; overflow: hidden; }
.sec::after { content: ""; position: absolute; top: 0; bottom: 0; right: 7px; width: 1px; background: rgba(255, 255, 255, .07); }
.sh { height: 22px; background: #2f2f2f; display: flex; align-items: center; gap: 4px; padding: 0 0 2px 3px; font-size: 12.7px; color: #e3e3e3; text-shadow: 1px 1px 0 #000; }
.sb { background: #3e3e3e; padding-bottom: 2px; }
.dr { height: 24px; display: flex; font-size: 11px; letter-spacing: .18px; }
.dr.tall { height: 26px; }
.dr label { width: 159px; border-right: 1px solid #2c2c2c; padding-left: 16px; line-height: 25px; white-space: nowrap; overflow: hidden; flex: none; }
.dr.tall label { line-height: 27px; }
.dr label.tight { letter-spacing: .04px; }
.dv { display: flex; align-items: center; padding-left: 5px; }
.ck { width: 14px; height: 14px; margin-left: 1px; background: #a9a9a9; border-radius: 2px; }
.ck.on { background: #dcdcdc; }
.num { width: 109px; height: 17px; margin-top: 1px; border-radius: 4px; background: #d9d9d9; color: #1a1a1a; display: flex; align-items: center; justify-content: space-between; padding: 0 5px 0 4px; }
.drop { width: 109px; height: 21px; border: 1px solid #222; box-shadow: inset 0 0 0 1px #e8e8e8; border-radius: 2px; background: linear-gradient(#d8d8d8, #a9a9a9); color: #121212; display: flex; align-items: center; justify-content: space-between; padding: 0 7px 0 5px; white-space: nowrap; }
.drop.wide { width: 184px; padding-right: 6px; }
.asset { width: 178px; height: 21px; border-radius: 3px; background: #5b5b5b; color: #eee; text-shadow: 1px 1px 0 #111; display: flex; align-items: center; justify-content: space-between; padding: 0 4px 2px 2px; }
.al { margin-left: 10px; } .am { margin-left: 11px; color: #bbb; }
.more { height: 14px; border-top: 1px solid #333; background: #484848; display: flex; justify-content: center; padding: 2px 15px 0 0; }
.task { height: 8px; background: #030202; display: flex; overflow: hidden; }
.task i { height: 8px; background: #333; }
.a { margin-left: 48px; width: 344px; } .b { margin-left: 247px; width: 44px; }
.task span { margin-left: 1131px; line-height: 14px; padding-top: 3px; color: #fff; white-space: nowrap; }
.task .c { width: 1px; margin-left: auto; margin-right: 4px; background: #777; }
</style>
